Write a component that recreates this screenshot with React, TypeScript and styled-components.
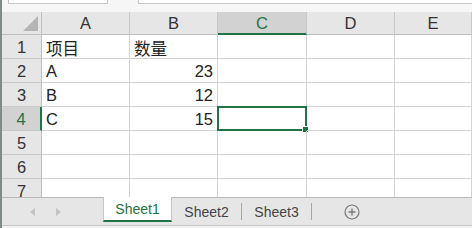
import React from 'react'
import styled, { createGlobalStyle } from 'styled-components'

const GREEN = '#217346'

const GlobalStyle = createGlobalStyle`
  * { box-sizing: border-box; }
  html, body { margin: 0; padding: 0; background: #ffffff; }
  body { font-family: "Liberation Sans", "Noto Sans CJK SC", sans-serif; }
`

const columns = ['A', 'B', 'C', 'D', 'E']
const rows: string[][] = [
  ['项目', '数量', '', '', ''],
  ['A', '23', '', '', ''],
  ['B', '12', '', '', ''],
  ['C', '15', '', '', ''],
  ['', '', '', '', ''],
  ['', '', '', '', ''],
  ['', '', '', '', ''],
]
const selCol = 2
const selRow = 3

const App = () => {
  return (
    <>
      <GlobalStyle />
      <Window>
        <FormulaStrip>
          <NameBox />
          <FormulaBox />
        </FormulaStrip>
        <Grid>
          <Corner>
            <CornerMark />
          </Corner>
          {columns.map((c, i) => (
            <ColHeader key={c} active={i === selCol}>
              {c}
            </ColHeader>
          ))}
          {rows.map((r, ri) => (
            <React.Fragment key={ri}>
              <RowHeader active={ri === selRow}>{ri + 1}</RowHeader>
              {r.map((v, ci) => (
                <Cell key={ci} numeric={/^\d+$/.test(v)} selected={ri === selRow && ci === selCol}>
                  {v}
                </Cell>
              ))}
            </React.Fragment>
          ))}
        </Grid>
        <TabBar>
          <NavArea>
            <NavArrow dir="left" />
            <NavArrow dir="right" />
          </NavArea>
          <SheetTab active>Sheet1</SheetTab>
          <SheetTab>Sheet2</SheetTab>
          <Divider />
          <SheetTab>Sheet3</SheetTab>
          <Divider />
          <AddButton>
            <svg width="16" height="16" viewBox="0 0 16 16">
              <circle cx="8" cy="8" r="7" fill="none" stroke="#7a7a7a" strokeWidth="1.2" />
              <path d="M8 4.5v7M4.5 8h7" stroke="#7a7a7a" strokeWidth="1.4" />
            </svg>
          </AddButton>
        </TabBar>
        <StatusEdge />
      </Window>
    </>
  )
}

export default App

const Window = styled.div`
  width: 472px;
  height: 228px;
  overflow: hidden;
  display: flex;
  flex-direction: column;
  border-left: 2px solid #7d8c85;
  background: #ffffff;
`

const FormulaStrip = styled.div`
  height: 12px;
  flex: none;
  display: flex;
  align-items: flex-start;
  gap: 30px;
  padding-left: 6px;
  background: #f6f6f6;
`

const NameBox = styled.div`
  width: 100px;
  height: 4px;
  background: #ffffff;
  border: 1px solid #c6c6c6;
  border-top: none;
`

const FormulaBox = styled.div`
  flex: 1;
  height: 4px;
  background: #ffffff;
  border: 1px solid #c6c6c6;
  border-top: none;
  border-right: none;
`

const Grid = styled.div`
  flex: none;
  height: 185px;
  overflow: hidden;
  display: grid;
  grid-template-columns: 40px 88px 88px 89px 88px 1fr;
  grid-template-rows: 23px repeat(7, 24px);
  font-size: 16.5px;
  color: #222;
`

const Corner = styled.div`
  background: #e6e6e6;
  border-right: 1px solid #bfbfbf;
  border-bottom: 1px solid #bfbfbf;
  display: flex;
  justify-content: flex-end;
  align-items: flex-end;
  padding: 0 3px 3px 0;
`

const CornerMark = styled.div`
  width: 0;
  height: 0;
  border-left: 15px solid transparent;
  border-bottom: 15px solid #b4b4b4;
`

const ColHeader = styled.div<{ active?: boolean }>`
  background: ${(p) => (p.active ? '#d2d2d2' : '#e6e6e6')};
  color: ${(p) => (p.active ? GREEN : '#333')};
  border-right: 1px solid #c8c8c8;
  border-bottom: ${(p) => (p.active ? `2px solid ${GREEN}` : '1px solid #bfbfbf')};
  display: flex;
  align-items: center;
  justify-content: center;
  padding-top: 1px;
`

const RowHeader = styled.div<{ active?: boolean }>`
  background: ${(p) => (p.active ? '#d2d2d2' : '#e6e6e6')};
  color: ${(p) => (p.active ? GREEN : '#333')};
  border-right: ${(p) => (p.active ? `2px solid ${GREEN}` : '1px solid #bfbfbf')};
  border-bottom: 1px solid #c8c8c8;
  display: flex;
  align-items: center;
  justify-content: center;
  padding-top: 2px;
`

const Cell = styled.div<{ numeric?: boolean; selected?: boolean }>`
  position: relative;
  border-right: 1px solid #d4d4d4;
  border-bottom: 1px solid #d4d4d4;
  display: flex;
  align-items: center;
  justify-content: ${(p) => (p.numeric ? 'flex-end' : 'flex-start')};
  padding: 2px 4px 0 4px;
  white-space: nowrap;

  ${(p) =>
    p.selected &&
    `
    &::before {
      content: '';
      position: absolute;
      left: -1px;
      top: -1px;
      right: -1px;
      bottom: -1px;
      border: 2px solid ${GREEN};
    }
    &::after {
      content: '';
      position: absolute;
      right: -3px;
      bottom: -3px;
      width: 5px;
      height: 5px;
      background: ${GREEN};
      border: 1px solid #ffffff;
    }
  `}
`

const TabBar = styled.div`
  flex: none;
  height: 29px;
  display: flex;
  align-items: flex-start;
  background: #e6e6e6;
  border-top: 1px solid #b9b9b9;
  border-bottom: 1px solid #c6c6c6;
  font-size: 14px;
  color: #444;
`

const NavArea = styled.div`
  width: 101px;
  height: 27px;
  display: flex;
  align-items: center;
  gap: 21px;
  padding-left: 28px;
`

const NavArrow = styled.div<{ dir: 'left' | 'right' }>`
  width: 0;
  height: 0;
  border-top: 4px solid transparent;
  border-bottom: 4px solid transparent;
  ${(p) =>
    p.dir === 'left' ? 'border-right: 5px solid #c2c2c2;' : 'border-left: 5px solid #c2c2c2;'}
`

const SheetTab = styled.div<{ active?: boolean }>`
  width: 69px;
  height: ${(p) => (p.active ? '25px' : '27px')};
  margin-top: ${(p) => (p.active ? '-1px' : '0')};
  display: flex;
  align-items: center;
  justify-content: center;
  background: ${(p) => (p.active ? '#ffffff' : 'transparent')};
  color: ${(p) => (p.active ? GREEN : '#444')};
  border-left: ${(p) => (p.active ? '1px solid #c6c6c6' : 'none')};
  border-right: ${(p) => (p.active ? '1px solid #c6c6c6' : 'none')};
  border-bottom: ${(p) => (p.active ? `2px solid ${GREEN}` : 'none')};
`

const Divider = styled.div`
  width: 1px;
  height: 17px;
  margin-top: 5px;
  background: #a6a6a6;
`

const AddButton = styled.div`
  width: 80px;
  height: 27px;
  display: flex;
  align-items: center;
  justify-content: center;
`

const StatusEdge = styled.div`
  flex: 1;
  background: #f3f3f3;
`
